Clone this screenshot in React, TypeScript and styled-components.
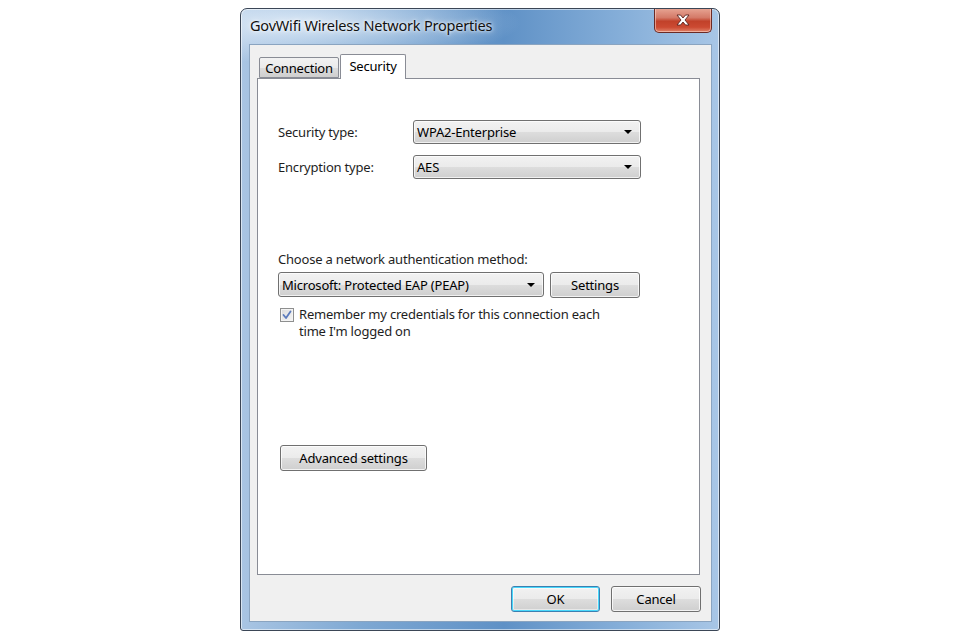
import React from "react";
import styled, { createGlobalStyle } from "styled-components";

const Global = createGlobalStyle`
  html, body { margin: 0; padding: 0; background: #ffffff; }
  body { font-family: "Noto Sans", "Open Sans", sans-serif; font-size: 12px; color: #000; }
`;

const Page = styled.div`
  width: 960px;
  height: 640px;
  display: flex;
  justify-content: flex-start;
  padding: 8px 0 0 240px;
  box-sizing: border-box;
`;

const Window = styled.div`
  width: 480px;
  height: 623px;
  box-sizing: border-box;
  border: 1px solid #3b4656;
  border-radius: 7px 7px 3px 3px;
  background:
    radial-gradient(ellipse 220px 40px at 60px 14px, rgba(230, 240, 250, 0.85), rgba(230, 240, 250, 0) 100%),
    linear-gradient(90deg, #a9c5e3 0%, #7ea8d3 25%, #5f91c6 55%, #86afd9 80%, #a8c6e6 100%);
  box-shadow: inset 0 0 0 1px rgba(255, 255, 255, 0.55);
  display: flex;
  flex-direction: column;
  overflow: hidden;
`;

const TitleBar = styled.div`
  height: 35px;
  display: flex;
  align-items: flex-start;
  justify-content: space-between;
  padding: 0 7px 0 9px;
  flex-shrink: 0;
`;

const Title = styled.div`
  font-size: 14.5px;
  color: #111;
  margin-top: 6px;
  letter-spacing: -0.2px;
  text-shadow: 0 0 6px rgba(255, 255, 255, 0.95), 0 0 3px rgba(255, 255, 255, 0.9);
`;

const CloseBtn = styled.div`
  width: 58px;
  height: 25px;
  margin-top: -1px;
  box-sizing: border-box;
  border: 1px solid #6b2a25;
  border-top: none;
  border-radius: 0 0 5px 5px;
  background: linear-gradient(180deg, #e8a796 0%, #d47a68 40%, #c1412a 55%, #cc4a32 80%, #e0836a 100%);
  box-shadow: inset 0 0 0 1px rgba(255, 220, 210, 0.55);
  display: flex;
  align-items: center;
  justify-content: center;
`;

const Client = styled.div`
  flex: 1;
  margin: 0 7px 8px 8px;
  background: #f0f0f0;
  border: 1px solid #8aa4c0;
  display: flex;
  flex-direction: column;
  padding: 9px 11px 9px 7px;
`;

const TabStrip = styled.div`
  display: flex;
  align-items: flex-end;
  height: 24px;
  padding-left: 2px;
  position: relative;
  z-index: 1;
`;

const Tab = styled.div<{ $active?: boolean; $w: number }>`
  box-sizing: border-box;
  width: ${(p) => p.$w}px;
  height: ${(p) => (p.$active ? "25px" : "21px")};
  padding-top: ${(p) => (p.$active ? "3px" : "2px")};
  text-align: center;
  margin-right: ${(p) => (p.$active ? "0" : "1px")};
  margin-bottom: ${(p) => (p.$active ? "-1px" : "0")};
  border: 1px solid #898c95;
  border-bottom: ${(p) => (p.$active ? "none" : "1px solid #898c95")};
  border-radius: 2px 2px 0 0;
  background: ${(p) =>
    p.$active ? "#ffffff" : "linear-gradient(180deg, #f2f2f2 0%, #ebebeb 50%, #dddddd 51%, #cfcfcf 100%)"};
  font-size: 13px;
  letter-spacing: -0.2px;
  color: #000;
  line-height: 16px;
`;

const Panel = styled.div`
  height: 497px;
  box-sizing: border-box;
  background: #ffffff;
  border: 1px solid #898c95;
  padding: 41px 59px 0 20px;
  display: flex;
  flex-direction: column;
`;

const FieldGrid = styled.div`
  display: grid;
  grid-template-columns: 135px 228px;
  row-gap: 11px;
  align-items: center;
`;

const Label = styled.div`
  font-size: 13px;
  line-height: 17px;
  letter-spacing: -0.2px;
  color: #1e1e1e;
`;

const Combo = styled.div<{ $w?: number; $h?: number }>`
  box-sizing: border-box;
  height: ${(p) => p.$h ?? 25}px;
  width: ${(p) => (p.$w ? `${p.$w}px` : "auto")};
  border: 1px solid #707070;
  border-radius: 3px;
  background: linear-gradient(180deg, #f2f2f2 0%, #ebebeb 50%, #dddddd 51%, #cfcfcf 100%);
  box-shadow: inset 0 0 0 1px rgba(255, 255, 255, 0.7);
  display: flex;
  align-items: center;
  justify-content: space-between;
  padding: 0 8px 0 3px;
  font-size: 13px;
  letter-spacing: -0.2px;
  color: #000;
`;

const Arrow = styled.span`
  width: 0;
  height: 0;
  border-left: 4px solid transparent;
  border-right: 4px solid transparent;
  border-top: 4px solid #000;
`;

const AuthBlock = styled.div`
  margin-top: 72px;
  display: flex;
  flex-direction: column;
`;

const AuthRow = styled.div`
  margin-top: 4px;
  display: flex;
  gap: 6px;
`;

const Button = styled.div<{ $w: number; $default?: boolean }>`
  box-sizing: border-box;
  width: ${(p) => p.$w}px;
  height: 26px;
  border: 1px solid ${(p) => (p.$default ? "#3c7fb1" : "#707070")};
  border-radius: 3px;
  background: linear-gradient(180deg, #f2f2f2 0%, #ebebeb 50%, #dddddd 51%, #cfcfcf 100%);
  box-shadow: ${(p) =>
    p.$default ? "inset 0 0 0 1px #48d8fb, inset 0 0 0 2px rgba(255,255,255,0.5)" : "inset 0 0 0 1px rgba(255, 255, 255, 0.75)"};
  display: flex;
  align-items: center;
  justify-content: center;
  font-size: 13px;
  letter-spacing: -0.2px;
  color: #000;
`;

const CheckRow = styled.div`
  margin-top: 8px;
  display: flex;
  align-items: flex-start;
  gap: 5px;
  padding-left: 2px;
`;

const CheckBox = styled.div`
  box-sizing: border-box;
  width: 14px;
  height: 14px;
  margin-top: 2px;
  border: 1px solid #8e8f8f;
  background: linear-gradient(135deg, #dcdcdc 0%, #f5f5f5 100%);
  box-shadow: inset 0 0 0 1px #f4f4f4;
  display: flex;
  align-items: center;
  justify-content: center;
  flex-shrink: 0;
`;

const CheckText = styled.div`
  font-size: 13px;
  line-height: 17px;
  letter-spacing: -0.2px;
  color: #1e1e1e;
  width: 308px;
`;

const AdvancedWrap = styled.div`
  margin-top: 105px;
  padding-left: 2px;
`;

const ButtonRow = styled.div`
  margin-top: 11px;
  display: flex;
  justify-content: flex-end;
  gap: 11px;
  margin-right: -1px;
`;

export default function App() {
  return (
    <>
      <Global />
      <Page>
        <Window>
          <TitleBar>
            <Title>GovWifi Wireless Network Properties</Title>
            <CloseBtn>
              <svg width="16" height="12" viewBox="0 0 16 12">
                <path
                  d="M2 1 L5.5 1 L8 4 L10.5 1 L14 1 L10 6 L14 11 L10.5 11 L8 8 L5.5 11 L2 11 L6 6 Z"
                  fill="#ffffff"
                  stroke="#5a2420"
                  strokeWidth="0.9"
                  strokeLinejoin="round"
                />
              </svg>
            </CloseBtn>
          </TitleBar>
          <Client>
            <TabStrip>
              <Tab $w={80}>Connection</Tab>
              <Tab $w={66} $active>
                Security
              </Tab>
            </TabStrip>
            <Panel>
              <FieldGrid>
                <Label>Security type:</Label>
                <Combo $h={24}>
                  WPA2-Enterprise
                  <Arrow />
                </Combo>
                <Label>Encryption type:</Label>
                <Combo $h={24}>
                  AES
                  <Arrow />
                </Combo>
              </FieldGrid>
              <AuthBlock>
                <Label>Choose a network authentication method:</Label>
                <AuthRow>
                  <Combo $w={266}>
                    Microsoft: Protected EAP (PEAP)
                    <Arrow />
                  </Combo>
                  <Button $w={90}>Settings</Button>
                </AuthRow>
              </AuthBlock>
              <CheckRow>
                <CheckBox>
                  <svg width="10" height="10" viewBox="0 0 10 10">
                    <path d="M1.5 5 L4 8 L8.5 1.5" fill="none" stroke="#5b7bbd" strokeWidth="1.8" strokeLinecap="round" strokeLinejoin="round" />
                  </svg>
                </CheckBox>
                <CheckText>Remember my credentials for this connection each time I'm logged on</CheckText>
              </CheckRow>
              <AdvancedWrap>
                <Button $w={147}>Advanced settings</Button>
              </AdvancedWrap>
            </Panel>
            <ButtonRow>
              <Button $w={89} $default>
                OK
              </Button>
              <Button $w={90}>Cancel</Button>
            </ButtonRow>
          </Client>
        </Window>
      </Page>
    </>
  );
}
